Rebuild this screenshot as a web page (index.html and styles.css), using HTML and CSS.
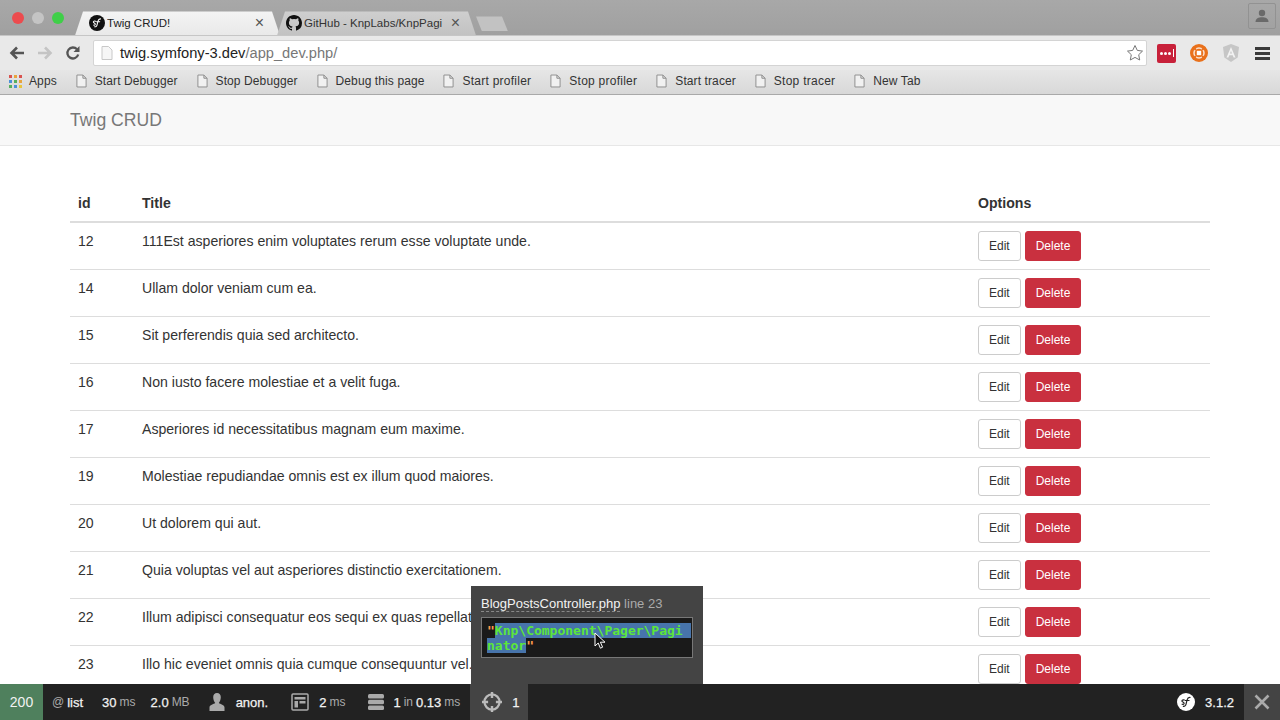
FILE: index.html
```html
<!DOCTYPE html>
<html lang="en">
<head>
<meta charset="utf-8">
<title>Twig CRUD!</title>
<link rel="stylesheet" href="styles.css">
</head>
<body>
<div class="screen">
  <header class="chrome">
    <div class="tabstrip">
      <div class="lights"><span class="light red"></span><span class="light grey"></span><span class="light green"></span></div>
      <div class="tab active">
        <svg class="fav" viewBox="0 0 18 18"><circle cx="9" cy="9" r="9" fill="#111"/><path d="M13.500 4.500c-1.700-.4-2.900.6-3.400 2.400l-1.200 4.700c-.4 1.400-1.500 2-3 1.500M8 7.500h4.500M7.800 7.300c-.8-.7-2.600-.7-2.900.5-.3 1.300 2.600 1.200 2.200 2.800-.3 1-1.500 1-2.400.5" fill="none" stroke="#fff" stroke-width="1.200"/></svg>
        <span class="tab-title">Twig CRUD!</span><span class="tab-x">×</span>
      </div>
      <div class="tab back">
        <svg class="fav" viewBox="0 0 16 16"><path fill="#111" d="M8 0C3.580 0 0 3.580 0 8c0 3.540 2.290 6.530 5.470 7.590.4.070.55-.17.55-.38v-1.340c-2.230.48-2.690-1.070-2.690-1.070-.36-.93-.89-1.170-.89-1.170-.73-.5.050-.49.050-.49.800.060 1.230.830 1.230.830.710 1.220 1.870.870 2.330.660.070-.520.280-.870.510-1.070-1.780-.200-3.640-.890-3.640-3.950 0-.870.310-1.590.820-2.150-.080-.200-.360-1.020.080-2.120 0 0 .670-.210 2.200.820a7.600 7.600 0 0 1 4 0c1.530-1.040 2.200-.820 2.200-.820.440 1.100.160 1.920.080 2.120.510.560.820 1.270.820 2.150 0 3.070-1.870 3.750-3.650 3.950.290.250.540.730.540 1.480v2.190c0 .210.150.460.550.380A8 8 0 0 0 16 8c0-4.420-3.580-8-8-8z"/></svg>
        <span class="tab-title">GitHub - KnpLabs/KnpPagi</span><span class="tab-x">×</span>
      </div>
      <div class="tab-new"></div>
      <div class="profile"><svg viewBox="0 0 16 16" width="16" height="16"><circle cx="8" cy="5" r="3.200" fill="#6a6a6a"/><path d="M1.500 14c0-3.500 3-4.800 6.500-4.800s6.500 1.300 6.500 4.800z" fill="#6a6a6a"/></svg></div>
    </div>
    <div class="toolbar">
      <svg class="nav-icon" viewBox="0 0 16 16"><path d="M15 8H3M8 2.500 2.500 8 8 13.500" fill="none" stroke="#555" stroke-width="2.600"/></svg>
      <svg class="nav-icon" viewBox="0 0 16 16"><path d="M1 8h12M8 2.500 13.500 8 8 13.500" fill="none" stroke="#c4c4c4" stroke-width="2.600"/></svg>
      <svg class="nav-icon" viewBox="0 0 16 16"><path d="M13.200 9.500A5.500 5.500 0 1 1 12 4.300" fill="none" stroke="#555" stroke-width="2.300"/><path d="M14.500 1v6h-6z" fill="#555"/></svg>
      <div class="omnibox">
        <svg class="page-icon" viewBox="0 0 12 14"><path d="M1 .5h6.500L11 4v9.500H1z" fill="#f6f6f6" stroke="#c8c8c8"/></svg>
        <span class="url">twig.symfony-3.dev<span class="url-path">/app_dev.php/</span></span>
        <svg class="star" viewBox="0 0 18 18"><path d="M9 1.500l2.300 4.900 5.200.7-3.800 3.600 1 5.300L9 13.400 4.300 16l1-5.300L1.500 7.100l5.200-.7z" fill="#fff" stroke="#777"/></svg>
      </div>
      <div class="ext lastpass"><i></i><i></i><i></i><b></b></div>
      <svg class="ext-svg" viewBox="0 0 18 18"><circle cx="9" cy="9" r="9" fill="#e9711c"/><circle cx="9" cy="9" r="5" fill="none" stroke="#fbe3d2" stroke-width="1.500"/><rect x="6.800" y="6.800" width="4.400" height="4.400" fill="#fff"/><path d="M3 3l3 3M15 3l-3 3M3 15l3-3M15 15l-3-3" stroke="#e9711c" stroke-width="2"/></svg>
      <svg class="ext-svg" viewBox="0 0 18 18"><path d="M9 0l8 3-1.300 10.500L9 18l-6.700-4.500L1 3z" fill="#c6c6c6"/><path d="M9 3 4.500 13.500h1.900l.9-2.300h3.400l.9 2.300h1.900zM8 9.600 9 7l1 2.600z" fill="#f2f2f2"/></svg>
      <div class="menu"><i></i><i></i><i></i></div>
    </div>
    <nav class="bookmarks">
      <span class="bm apps"><span class="apps-grid"><i class="c1"></i><i class="c2"></i><i class="c3"></i><i class="c4"></i><i class="c5"></i><i class="c6"></i><i class="c7"></i><i class="c8"></i><i class="c9"></i></span>Apps</span>
      <span class="bm"><svg class="bm-icon" viewBox="0 0 12 14"><path d="M1 .5h6.500L11 4v9.500H1zM7.500.5V4H11" fill="#f1f1f1" stroke="#8a8a8a"/></svg>Start Debugger</span>
      <span class="bm"><svg class="bm-icon" viewBox="0 0 12 14"><path d="M1 .5h6.500L11 4v9.500H1zM7.500.5V4H11" fill="#f1f1f1" stroke="#8a8a8a"/></svg>Stop Debugger</span>
      <span class="bm"><svg class="bm-icon" viewBox="0 0 12 14"><path d="M1 .5h6.500L11 4v9.500H1zM7.500.5V4H11" fill="#f1f1f1" stroke="#8a8a8a"/></svg>Debug this page</span>
      <span class="bm spaced"><svg class="bm-icon" viewBox="0 0 12 14"><path d="M1 .5h6.500L11 4v9.500H1zM7.500.5V4H11" fill="#f1f1f1" stroke="#8a8a8a"/></svg>Start profiler</span>
      <span class="bm spaced"><svg class="bm-icon" viewBox="0 0 12 14"><path d="M1 .5h6.500L11 4v9.500H1zM7.500.5V4H11" fill="#f1f1f1" stroke="#8a8a8a"/></svg>Stop profiler</span>
      <span class="bm"><svg class="bm-icon" viewBox="0 0 12 14"><path d="M1 .5h6.500L11 4v9.500H1zM7.500.5V4H11" fill="#f1f1f1" stroke="#8a8a8a"/></svg>Start tracer</span>
      <span class="bm spaced"><svg class="bm-icon" viewBox="0 0 12 14"><path d="M1 .5h6.500L11 4v9.500H1zM7.500.5V4H11" fill="#f1f1f1" stroke="#8a8a8a"/></svg>Stop tracer</span>
      <span class="bm"><svg class="bm-icon" viewBox="0 0 12 14"><path d="M1 .5h6.500L11 4v9.500H1zM7.500.5V4H11" fill="#f1f1f1" stroke="#8a8a8a"/></svg>New Tab</span>
    </nav>
  </header>

  <main class="page">
    <div class="navbar"><a class="brand">Twig CRUD</a></div>
    <div class="content">
      <table class="table">
        <thead><tr><th class="col-id">id</th><th>Title</th><th class="col-opt">Options</th></tr></thead>
        <tbody>
          <tr><td>12</td><td>111Est asperiores enim voluptates rerum esse voluptate unde.</td><td class="opts"><a class="btn edit">Edit</a><a class="btn del">Delete</a></td></tr>
          <tr><td>14</td><td>Ullam dolor veniam cum ea.</td><td class="opts"><a class="btn edit">Edit</a><a class="btn del">Delete</a></td></tr>
          <tr><td>15</td><td>Sit perferendis quia sed architecto.</td><td class="opts"><a class="btn edit">Edit</a><a class="btn del">Delete</a></td></tr>
          <tr><td>16</td><td>Non iusto facere molestiae et a velit fuga.</td><td class="opts"><a class="btn edit">Edit</a><a class="btn del">Delete</a></td></tr>
          <tr><td>17</td><td>Asperiores id necessitatibus magnam eum maxime.</td><td class="opts"><a class="btn edit">Edit</a><a class="btn del">Delete</a></td></tr>
          <tr><td>19</td><td>Molestiae repudiandae omnis est ex illum quod maiores.</td><td class="opts"><a class="btn edit">Edit</a><a class="btn del">Delete</a></td></tr>
          <tr><td>20</td><td>Ut dolorem qui aut.</td><td class="opts"><a class="btn edit">Edit</a><a class="btn del">Delete</a></td></tr>
          <tr><td>21</td><td>Quia voluptas vel aut asperiores distinctio exercitationem.</td><td class="opts"><a class="btn edit">Edit</a><a class="btn del">Delete</a></td></tr>
          <tr><td>22</td><td>Illum adipisci consequatur eos sequi ex quas repellat.</td><td class="opts"><a class="btn edit">Edit</a><a class="btn del">Delete</a></td></tr>
          <tr><td>23</td><td>Illo hic eveniet omnis quia cumque consequuntur vel.</td><td class="opts"><a class="btn edit">Edit</a><a class="btn del">Delete</a></td></tr>
        </tbody>
      </table>
    </div>
  </main>

  <aside class="dump-tip">
    <div class="dump-file"><span class="dump-name">BlogPostsController.php</span> <span class="dump-line">line 23</span></div>
    <div class="dump-code"><span class="q">"</span><span class="sel">Knp\Component\Pager\Pagi </span><br><span class="sel">nator</span><span class="q">"</span></div>
    <svg class="cursor" viewBox="0 0 12 18"><path d="M1 1v13l3.200-3 2.200 5.200 2.200-1L6.400 10.200H11z" fill="#111" stroke="#fff"/></svg>
  </aside>

  <footer class="sfbar">
    <div class="sf-status">200</div>
    <div class="sf-item route"><span class="dim">@</span><b>list</b></div>
    <div class="sf-item time"><b>30</b><span class="dim">ms</span></div>
    <div class="sf-item mem"><b>2.0</b><span class="dim">MB</span></div>
    <div class="sf-item user">
      <svg class="sf-icon" viewBox="0 0 16 18"><path d="M8 0c2.500 0 3.800 1.800 3.800 4.300S10.600 9 9.800 10c1.500 1.300 5.700 1.800 5.700 4.500V18H.5v-3.500c0-2.700 4.200-3.200 5.700-4.500-.8-1-2-3.200-2-5.700S5.500 0 8 0z" fill="#aaa"/></svg>
      <b>anon.</b>
    </div>
    <div class="sf-item twig">
      <svg class="sf-icon wide" viewBox="0 0 18 18"><rect x="1" y="1" width="16" height="16" rx="1" fill="none" stroke="#aaa" stroke-width="1.500"/><path d="M3.500 4h11v2.500h-11zM3.500 8h3.500v6.500H3.500zM8.500 8h6v2.500h-6z" fill="#aaa"/></svg>
      <b>2</b><span class="dim">ms</span>
    </div>
    <div class="sf-item db">
      <svg class="sf-icon wide" viewBox="0 0 18 18"><rect x="1" y="1" width="16" height="4.500" rx="1.500" fill="#aaa"/><rect x="1" y="6.800" width="16" height="4.500" rx="1.500" fill="#aaa"/><rect x="1" y="12.600" width="16" height="4.500" rx="1.500" fill="#aaa"/></svg>
      <b>1</b><span class="dim">in</span><b>0.13</b><span class="dim">ms</span>
    </div>
    <div class="sf-item dump">
      <svg class="sf-icon dump-icon" viewBox="0 0 18 18"><circle cx="9" cy="9" r="6.800" fill="none" stroke="#bbb" stroke-width="2"/><path d="M9 0v5.500M9 12.500V18M0 9h5.500M12.500 9H18" stroke="#bbb" stroke-width="2.200"/></svg>
      <b>1</b>
    </div>
    <div class="sf-spacer"></div>
    <div class="sf-item version">
      <svg class="sf-logo" viewBox="0 0 18 18"><circle cx="9" cy="9" r="9" fill="#fff"/><path d="M13.500 4.500c-1.700-.4-2.900.6-3.400 2.400l-1.200 4.700c-.4 1.400-1.500 2-3 1.500M8 7.500h4.500M7.800 7.300c-.8-.7-2.600-.7-2.900.5-.3 1.300 2.600 1.200 2.200 2.800-.3 1-1.500 1-2.400.5" fill="none" stroke="#222" stroke-width="1.200"/></svg>
      <b>3.1.2</b>
    </div>
    <div class="sf-close"><svg viewBox="0 0 16 16" width="16" height="16"><path d="M1.500 1.500l13 13M14.500 1.500l-13 13" stroke="#aaa" stroke-width="2.600"/></svg></div>
  </footer>
</div>
</body>
</html>
```
FILE: styles.css
```css
* { box-sizing: border-box; }
html, body { margin: 0; height: 100%; }
body { font-family: "Liberation Sans", Arial, sans-serif; color: #292b2c; background: #fff; }
.screen { position: relative; width: 1280px; height: 720px; overflow: hidden; display: flex; flex-direction: column; }

.chrome { flex: none; height: 95px; display: flex; flex-direction: column; border-bottom: 1px solid #a9a9a9; }
.tabstrip { height: 36px; background: linear-gradient(#a8a8a8, #a0a0a0); display: flex; align-items: flex-end; padding-left: 12px; }
.lights { display: flex; gap: 8px; align-self: flex-start; margin-top: 12px; width: 63px; }
.light { width: 12px; height: 12px; border-radius: 50%; }
.light.red { background: #ec4b4e; }
.light.grey { background: #c4c4c4; }
.light.green { background: #3fcf48; }
.tab { height: 24px; display: flex; align-items: center; font-size: 11.500px; color: #222; clip-path: polygon(0 100%, 8px 0, calc(100% - 8px) 0, 100% 100%); }
.tab.active { width: 205px; padding: 0 16px 0 14px; background: linear-gradient(#f4f4f4, #e9e9e9); }
.tab.back { width: 199px; margin-left: -3px; padding: 0 16px 0 9px; background: linear-gradient(#cfcfcf, #c2c2c2); color: #333; }
.fav { width: 16px; height: 16px; flex: none; margin-right: 2px; }
.tab-title { flex: 1; overflow: hidden; white-space: nowrap; }
.tab.back .tab-title { margin-right: 8px; }
.tab-x { font-size: 16px; color: #555; line-height: 1; }
.tab-new { width: 32px; height: 15px; margin-bottom: 4px; background: #c2c2c2; clip-path: polygon(0 0, calc(100% - 6px) 0, 100% 100%, 6px 100%); }
.profile { margin-left: auto; width: 28px; height: 26px; margin-right: 4px; margin-bottom: 4px; border: 1px solid #929292; border-radius: 2px; display: flex; align-items: center; justify-content: center; align-self: center; }

.toolbar { height: 35px; background: #e9e9e9; display: flex; align-items: center; padding: 0 9px; border-top: 1px solid #c6c6c6; }
.nav-icon { width: 16px; height: 16px; margin-right: 12px; flex: none; }
.omnibox { width: 1054px; height: 26px; margin-bottom: 1px; background: #fff; border-radius: 2px; border: 1px solid #d4d4d4; display: flex; align-items: center; padding: 0 2px 0 7px; }
.page-icon { width: 12px; height: 14px; margin-right: 7px; flex: none; }
.url { flex: 1; font-size: 14.660px; color: #222; white-space: nowrap; }
.url-path { color: #777; }
.star { width: 18px; height: 18px; flex: none; }
.ext { flex: none; }
.lastpass { width: 19px; height: 19px; margin-left: 10px; background: #c8213a; border-radius: 2px; display: flex; align-items: center; justify-content: center; gap: 1px; }
.lastpass i { width: 3px; height: 3px; border-radius: 50%; background: #fff; }
.lastpass b { width: 1px; height: 8px; background: #fff; margin-left: 1px; }
.ext-svg { width: 18px; height: 18px; flex: none; margin-left: 14px; }
.menu { margin-left: 15px; width: 15px; display: flex; flex-direction: column; gap: 2px; flex: none; }
.menu i { display: block; height: 3px; background: #3a3a3a; }

.bookmarks { height: 24px; flex: none; background: linear-gradient(#e6e6e6, #d8d8d8); display: flex; align-items: center; padding: 0 0 2px 9px; font-size: 12px; color: #333; letter-spacing: .1px; }
.bm { display: flex; align-items: center; margin-right: 19px; white-space: nowrap; }
.bm.spaced { letter-spacing: .25px; }
.apps-grid { display: grid; grid-template-columns: repeat(3, 3px); gap: 2px; margin-right: 7px; }
.apps-grid i { width: 3px; height: 3px; display: block; }
.c1 { background: #d9534f; } .c2 { background: #e8a33c; } .c3 { background: #d9534f; }
.c4 { background: #4a90d9; } .c5 { background: #57b05c; } .c6 { background: #e8a33c; }
.c7 { background: #57b05c; } .c8 { background: #4a90d9; } .c9 { background: #e8c43c; }
.bm-icon { width: 11px; height: 14px; margin-right: 8px; flex: none; }

.page { flex: 1; min-height: 0; overflow: hidden; }
.navbar { height: 51px; background: #f8f8f8; border-bottom: 1px solid #e7e7e7; padding: 0 70px; display: flex; align-items: center; }
.brand { font-size: 17.600px; color: #777; }
.content { padding: 41px 70px 0; }
.table { width: 1140px; border-collapse: collapse; table-layout: fixed; font-size: 14.100px; }
.table th { text-align: left; font-weight: 700; padding: 0 8px 2px; height: 35px; vertical-align: middle; border-bottom: 2px solid #ddd; color: #333; }
.col-id { width: 64px; }
.col-opt { width: 240px; }
.table td { height: 47px; padding: 11px 8px 0; vertical-align: top; border-bottom: 1px solid #ddd; color: #333; line-height: 14px; }
.table td.opts { padding-top: 8px; }
.opts { white-space: nowrap; }
.btn { display: inline-block; height: 30px; line-height: 28px; padding: 0 10px; font-size: 12px; border: 1px solid #ccc; border-radius: 3px; vertical-align: top; }
.btn.edit { color: #333; background: #fff; margin-right: 4px; }
.btn.del { color: #fff; background: #c9303f; border-color: #c9303f; }

.dump-tip { position: absolute; left: 471px; top: 586px; width: 232px; height: 98px; background: #444; padding: 10px 10px 0; }
.dump-file { font-size: 13px; line-height: 15px; white-space: nowrap; }
.dump-name { color: #f2f2f2; border-bottom: 1px dashed #888; }
.dump-line { color: #aaa; }
.dump-code { margin-top: 6px; height: 41px; width: 212px; background: #1a1a1a; border: 1px solid #777; padding: 5px 5px; font-family: "DejaVu Sans Mono", "Liberation Mono", monospace; font-size: 13px; font-weight: 700; line-height: 15px; color: #5ce63a; white-space: pre; }
.q { color: #ff9b4d; }
.sel { background: #4774ab; }
.cursor { position: absolute; left: 123px; top: 46px; width: 12px; height: 18px; }

.sfbar { position: absolute; left: 0; right: 0; bottom: 0; height: 36px; background: #222; display: flex; align-items: stretch; font-size: 13px; color: #f2f2f2; }
.sf-status { width: 43px; background: #4f805d; display: flex; align-items: center; justify-content: center; font-size: 14px; }
.sf-item { display: flex; align-items: center; gap: 3px; white-space: pre; }
.sf-item b { font-weight: 400; color: #f2f2f2; -webkit-text-stroke: .25px #f2f2f2; }
.dim { color: #aaa; font-size: 12px; }
.route { margin-left: 9px; }
.time { margin-left: 19px; }
.mem { margin-left: 15px; }
.user { margin-left: 19px; gap: 11px; }
.twig { margin-left: 23px; }
.db { margin-left: 22px; }
.dump { margin-left: 10px; background: #444; padding: 0 0 0 12px; width: 58px; gap: 10px; }
.sf-icon { width: 16px; height: 18px; flex: none; }
.sf-icon.wide { width: 18px; }
.twig .sf-icon { margin-right: 7px; }
.db .sf-icon { margin-right: 5px; }
.sf-icon.dump-icon { width: 20px; height: 20px; }
.sf-spacer { flex: 1; }
.version { gap: 10px; margin-right: 10px; }
.sf-logo { width: 18px; height: 18px; flex: none; }
.sf-close { width: 36px; background: #444; display: flex; align-items: center; justify-content: center; }
```
